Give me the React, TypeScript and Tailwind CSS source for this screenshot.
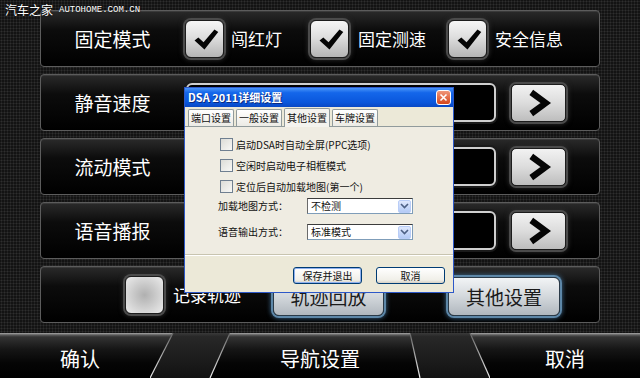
import React from "react";

const Check = () => (
  <svg width="39" height="38" viewBox="0 0 39 38">
    <path d="M9 20.5 L13 17.5 L18.5 22.5 L30 9 L34 11.5 L19.5 30 Z" fill="#050505" />
  </svg>
);

const CheckBox = ({ checked = true }: { checked?: boolean }) => (
  <div
    className={
      checked
        ? "w-[39px] h-[38px] shrink-0 rounded-[6px] border border-[#1c1c1c] bg-[linear-gradient(180deg,#f6f6f6_0%,#dedede_45%,#b4b4b4_100%)] shadow-[0_0_0_2px_#4b4b4b,0_0_5px_2px_#2e2e2e] flex items-center justify-center"
        : "w-[39px] h-[38px] shrink-0 rounded-[6px] border border-[#1c1c1c] bg-[radial-gradient(ellipse_at_center,#b0b0b0_0%,#d4d4d4_60%,#ececec_100%)] shadow-[0_0_0_2px_#4b4b4b,0_0_5px_2px_#2e2e2e]"
    }
  >
    {checked && <Check />}
  </div>
);

const ArrowButton = () => (
  <div className="ml-[15px] w-[55px] h-[38px] shrink-0 rounded-[5px] border border-[#1c1c1c] bg-[linear-gradient(180deg,#f2f2f2_0%,#dcdcdc_50%,#bdbdbd_100%)] shadow-[0_0_0_2px_#4b4b4b,0_0_5px_2px_#2e2e2e] flex items-center justify-center">
    <svg width="55" height="38" viewBox="0 0 55 38">
      <polyline points="20,8 35,19 20,30" fill="none" stroke="#050505" strokeWidth="6.5" strokeLinejoin="miter" />
    </svg>
  </div>
);

const InputBox = () => (
  <div className="ml-[2px] w-[310px] h-[39px] shrink-0 rounded-[6px] border-2 border-[#cfcfcf] bg-black shadow-[0_0_0_2px_#1a1a1a]" />
);

const Row = ({ children }: { children: React.ReactNode }) => (
  <div className="h-[57px] rounded-[4px] border border-[#5c5c5c] bg-[linear-gradient(180deg,#2a2a2a_0%,#0c0c0c_35%,#000_100%)] shadow-[inset_0_1px_0_#3a3a3a] flex items-center">
    {children}
  </div>
);

const Label = ({ text }: { text: string }) => (
  <div className="w-[143px] shrink-0 text-center text-white text-[19px] leading-none">{text}</div>
);

const XpCheck = ({ text }: { text: string }) => (
  <div className="h-[21px] ml-[2px] flex items-center gap-[3px]">
    <div className="w-[13px] h-[13px] border border-[#6f7f90] bg-[linear-gradient(135deg,#dcdcd7,#f8f8f6)]" />
    <span className="leading-none">{text}</span>
  </div>
);

const XpSelect = ({ value }: { value: string }) => (
  <div className="w-[106px] h-[16px] border border-[#7f9db9] border-t-[#3c3c3c] border-l-[#6a6a6a] bg-white flex items-center justify-between">
    <span className="pl-[3px] leading-none">{value}</span>
    <div className="w-[13px] h-[13px] mr-px rounded-[2px] border border-[#b9cdf7] bg-[linear-gradient(180deg,#dfe8fd,#b4cbf6)] flex items-center justify-center">
      <svg width="9" height="6" viewBox="0 0 9 6">
        <polyline points="1,1 4.5,4.5 8,1" fill="none" stroke="#4d6185" strokeWidth="1.6" />
      </svg>
    </div>
  </div>
);

const Tab = ({ text, active = false }: { text: string; active?: boolean }) => (
  <div
    className={
      active
        ? "w-[46px] h-[19px] -mb-px text-center leading-[18px] border border-[#919b9c] border-b-0 rounded-t-[2px] bg-[#f4f3ee] relative"
        : "w-[46px] h-[17px] text-center leading-[16px] border border-[#919b9c] border-b-0 rounded-t-[2px] bg-[linear-gradient(180deg,#ffffff,#ecebe5)]"
    }
  >
    {text}
  </div>
);

const Dialog = () => (
  <div className="absolute left-[184px] top-[87px] w-[270px] h-[206px] z-10 bg-[#ece9d8] border border-[#2d58c8] flex flex-col text-[10px] text-[#111]">
    <div className="h-[19px] shrink-0 bg-[linear-gradient(180deg,#4a95f8_0%,#1466ea_25%,#0a57dc_75%,#0848c4_100%)] flex items-center justify-between pl-[3px] pr-[2px]">
      <span className="text-white font-bold text-[11px] leading-none [text-shadow:1px_1px_0_#0a2a80]">DSA 2011详细设置</span>
      <div className="w-[15px] h-[15px] rounded-[3px] border border-white bg-[linear-gradient(180deg,#f0977a,#d5461c)] flex items-center justify-center">
        <svg width="9" height="9" viewBox="0 0 9 9">
          <path d="M1.5 1.5 L7.5 7.5 M7.5 1.5 L1.5 7.5" stroke="#fff" strokeWidth="1.6" />
        </svg>
      </div>
    </div>
    <div className="h-[19px] shrink-0 flex items-end gap-[2px] pl-[3px]">
      <Tab text="端口设置" />
      <Tab text="一般设置" />
      <Tab text="其他设置" active />
      <Tab text="车牌设置" />
    </div>
    <div className="h-[129px] shrink-0 border-t border-[#919b9c] border-b border-b-[#c8c4b0] bg-[#efece2] pl-[33px] pt-[7px] flex flex-col">
      <XpCheck text="启动DSA时自动全屏(PPC选项)" />
      <XpCheck text="空闲时启动电子相框模式" />
      <XpCheck text="定位后自动加载地图(第一个)" />
      <div className="mt-[1px] flex items-center">
        <span className="w-[89px] leading-none">加载地图方式：</span>
        <XpSelect value="不检测" />
      </div>
      <div className="mt-[10px] flex items-center">
        <span className="w-[89px] leading-none">语音输出方式：</span>
        <XpSelect value="标准模式" />
      </div>
    </div>
    <div className="flex-1 border-t border-white flex items-start gap-[14px] pl-[108px] pt-[11px]">
      <div className="w-[69px] h-[17px] rounded-[3px] border border-[#003c74] bg-[linear-gradient(180deg,#ffffff,#f0efe8_80%,#d6d0c5)] shadow-[inset_0_0_0_1px_#8fb0ee] flex items-center justify-center leading-none">
        保存并退出
      </div>
      <div className="w-[69px] h-[17px] rounded-[3px] border border-[#003c74] bg-[linear-gradient(180deg,#ffffff,#f0efe8_80%,#d6d0c5)] flex items-center justify-center leading-none">
        取消
      </div>
    </div>
  </div>
);

const segBg =
  "bg-[linear-gradient(180deg,#a8a8a8_0px,#5a5a5a_2px,#333_4px,#161616_16px,#050505_30px,#000_100%)]";

const SegStops = () => (
  <>
    <stop offset="0" stopColor="#a8a8a8" />
    <stop offset="0.045" stopColor="#5a5a5a" />
    <stop offset="0.09" stopColor="#333" />
    <stop offset="0.35" stopColor="#161616" />
    <stop offset="0.67" stopColor="#050505" />
    <stop offset="1" stopColor="#000" />
  </>
);

const BottomBar = () => (
  <div className="mt-[10px] h-[45px] flex text-white text-[20px] leading-none">
    <div className={"w-[150px] shrink-0 flex items-center justify-center pt-[6px] pl-[10px] " + segBg}>确认</div>
    <svg width="80" height="45" viewBox="0 0 80 45" className="shrink-0 block">
      <defs>
        <linearGradient id="segA" x1="0" y1="0" x2="0" y2="45" gradientUnits="userSpaceOnUse">
          <SegStops />
        </linearGradient>
        <linearGradient id="gapA" x1="0" y1="0" x2="0" y2="45" gradientUnits="userSpaceOnUse">
          <stop offset="0" stopColor="#3a3a3a" />
          <stop offset="0.08" stopColor="#282828" />
          <stop offset="1" stopColor="#121212" />
        </linearGradient>
        <linearGradient id="lineA" x1="0" y1="0" x2="0" y2="45" gradientUnits="userSpaceOnUse">
          <stop offset="0" stopColor="#666" />
          <stop offset="1" stopColor="#f0f0f0" />
        </linearGradient>
      </defs>
      <polygon points="0,0 23,0 0,45" fill="url(#segA)" />
      <polygon points="23,0 80,0 60,45 0,45" fill="url(#gapA)" />
      <polygon points="80,0 80,45 60,45" fill="url(#segA)" />
      <line x1="23" y1="0" x2="0" y2="45" stroke="url(#lineA)" strokeWidth="1.2" />
      <line x1="80" y1="0" x2="60" y2="45" stroke="url(#lineA)" strokeWidth="1.2" />
    </svg>
    <div className={"w-[180px] shrink-0 flex items-center justify-center pt-[6px] " + segBg}>导航设置</div>
    <svg width="80" height="45" viewBox="0 0 80 45" className="shrink-0 block">
      <defs>
        <linearGradient id="segB" x1="0" y1="0" x2="0" y2="45" gradientUnits="userSpaceOnUse">
          <SegStops />
        </linearGradient>
        <linearGradient id="gapB" x1="0" y1="0" x2="0" y2="45" gradientUnits="userSpaceOnUse">
          <stop offset="0" stopColor="#3a3a3a" />
          <stop offset="0.08" stopColor="#282828" />
          <stop offset="1" stopColor="#121212" />
        </linearGradient>
        <linearGradient id="lineB" x1="0" y1="0" x2="0" y2="45" gradientUnits="userSpaceOnUse">
          <stop offset="0" stopColor="#666" />
          <stop offset="1" stopColor="#f0f0f0" />
        </linearGradient>
      </defs>
      <polygon points="0,0 10,45 0,45" fill="url(#segB)" />
      <polygon points="0,0 60,0 80,45 10,45" fill="url(#gapB)" />
      <polygon points="60,0 80,0 80,45" fill="url(#segB)" />
      <line x1="0" y1="0" x2="10" y2="45" stroke="url(#lineB)" strokeWidth="1.2" />
      <line x1="60" y1="0" x2="80" y2="45" stroke="url(#lineB)" strokeWidth="1.2" />
    </svg>
    <div className={"flex-1 flex items-center justify-center pt-[6px] " + segBg}>取消</div>
  </div>
);

export default function App() {
  return (
    <div className="relative w-[640px] h-[378px] overflow-hidden bg-[#131313] bg-[radial-gradient(circle,#2e2e2e_0.8px,transparent_1.2px)] bg-[size:3px_3px] font-['Noto_Sans_CJK_SC',sans-serif] flex flex-col">
      <div className="flex flex-col gap-[7px] px-[40px] pt-[10px]">
        <Row>
          <Label text="固定模式" />
          <div className="ml-px w-[125px] shrink-0 flex items-center">
            <CheckBox />
            <span className="ml-[7px] text-white text-[17px] leading-none">闯红灯</span>
          </div>
          <div className="w-[138px] shrink-0 flex items-center">
            <CheckBox />
            <span className="ml-[9px] text-white text-[17px] leading-none">固定测速</span>
          </div>
          <div className="flex items-center">
            <CheckBox />
            <span className="ml-[8px] text-white text-[17px] leading-none">安全信息</span>
          </div>
        </Row>
        <Row>
          <Label text="静音速度" />
          <InputBox />
          <ArrowButton />
        </Row>
        <Row>
          <Label text="流动模式" />
          <InputBox />
          <ArrowButton />
        </Row>
        <Row>
          <Label text="语音播报" />
          <InputBox />
          <ArrowButton />
        </Row>
        <Row>
          <div className="ml-[84px]">
            <CheckBox checked={false} />
          </div>
          <span className="ml-[9px] w-[100px] text-white text-[17px] leading-none">记录轨迹</span>
          <div className="mt-[3px] w-[111px] h-[39px] rounded-[6px] border border-[#2a3a48] bg-[linear-gradient(180deg,#f2f4f6_0%,#d3d8dc_50%,#b0b7be_100%)] shadow-[0_0_0_2px_#5d87a8,0_0_5px_2px_#3f6a8e] flex items-center justify-center text-[#1a1a1a] text-[19px] leading-none">
            轨迹回放
          </div>
          <div className="ml-[64px] mt-[3px] w-[112px] h-[39px] rounded-[6px] border border-[#2a3a48] bg-[linear-gradient(180deg,#f2f4f6_0%,#d3d8dc_50%,#b0b7be_100%)] shadow-[0_0_0_2px_#5d87a8,0_0_5px_2px_#3f6a8e] flex items-center justify-center text-[#1a1a1a] text-[19px] leading-none">
            其他设置
          </div>
        </Row>
      </div>
      <BottomBar />
      <div className="absolute left-[5px] top-[4px] flex items-center gap-[6px] text-white leading-none [text-shadow:0_0_2px_#000]">
        <span className="text-[12px]">汽车之家</span>
        <span className="font-['Liberation_Mono',monospace] text-[9px]">AUTOHOME.COM.CN</span>
      </div>
      <Dialog />
    </div>
  );
}
